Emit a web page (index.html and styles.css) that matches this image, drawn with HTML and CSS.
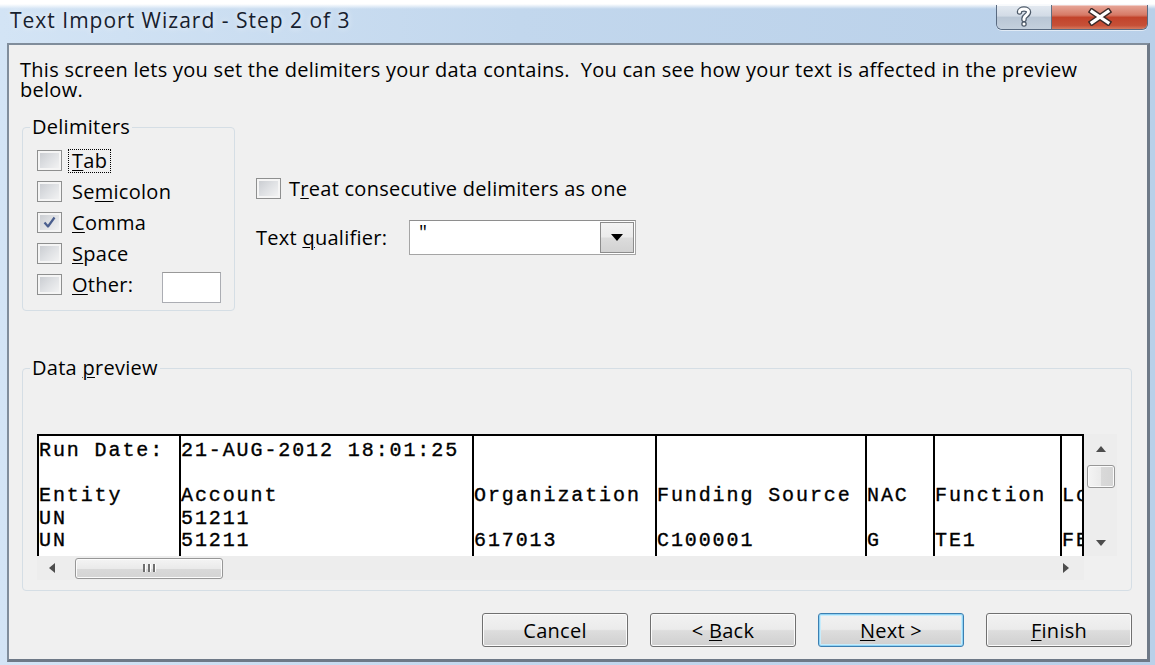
FILE: index.html
```html
<!DOCTYPE html>
<html lang="en">
<head>
<meta charset="utf-8">
<title>Text Import Wizard - Step 2 of 3</title>
<link rel="stylesheet" href="styles.css">
</head>
<body>
<div class="window">
  <header class="titlebar">
    <span class="title">Text Import Wizard - Step 2 of 3</span>
    <div class="caption-buttons">
      <button class="cap cap-help" aria-label="Help">
        <svg width="18" height="22" viewBox="0 0 18 22">
          <g fill="none" stroke-linecap="round" stroke-linejoin="round">
            <path class="ol" d="M4.5 6 C4.5 2 13.5 2 13.5 6 C13.5 9.5 9 9.5 9 12.5 L9 13.5" />
            <path class="ol" d="M9 18 L9 18.1" />
            <path class="fg" d="M4.5 6 C4.5 2 13.5 2 13.5 6 C13.5 9.5 9 9.5 9 12.5 L9 13.5" />
            <path class="fg" d="M9 18 L9 18.1" />
          </g>
        </svg>
      </button>
      <button class="cap cap-close" aria-label="Close">
        <svg width="28" height="18" viewBox="0 0 28 18">
          <g fill="none" stroke-linecap="square">
            <path class="ol" d="M6 3.5 L22 14.5 M22 3.5 L6 14.5" />
            <path class="fg" d="M6 3.5 L22 14.5 M22 3.5 L6 14.5" />
          </g>
        </svg>
      </button>
    </div>
  </header>

  <main class="client">
    <p class="intro">This screen lets you set the delimiters your data contains.&nbsp; You can see how your text is affected in the preview below.</p>

    <div class="options">
      <fieldset class="group delimiters">
        <legend>Delimiters</legend>
        <div class="check-list">
          <label class="check"><span class="cb"></span><span class="lbl focused"><u>T</u>ab</span></label>
          <label class="check"><span class="cb"></span><span class="lbl">Se<u>m</u>icolon</span></label>
          <label class="check"><span class="cb checked"><svg width="17" height="15" viewBox="0 0 17 15"><path d="M3.5 7.5 L7 11.5 L13.5 2.5" fill="none" stroke="#4a5e8e" stroke-width="2.2" stroke-linejoin="round"/></svg></span><span class="lbl"><u>C</u>omma</span></label>
          <label class="check"><span class="cb"></span><span class="lbl"><u>S</u>pace</span></label>
          <label class="check"><span class="cb"></span><span class="lbl"><u>O</u>ther:</span><span class="other-box"></span></label>
        </div>
      </fieldset>

      <div class="side">
        <label class="check treat"><span class="cb"></span><span class="lbl">T<u>r</u>eat consecutive delimiters as one</span></label>
        <div class="qualifier">
          <span class="qualifier-label">Text <u>q</u>ualifier:</span>
          <div class="combo">
            <span class="combo-value">"</span>
            <span class="combo-drop"><svg width="12" height="7" viewBox="0 0 12 7"><path d="M0 0 H12 L6 7 Z" fill="#000"/></svg></span>
          </div>
        </div>
      </div>
    </div>

    <fieldset class="group preview">
      <legend>Data <u>p</u>review</legend>
      <div class="preview-box">
        <div class="preview-top">
          <div class="sheet">
            <div class="col c1"><div>Run Date:</div><div></div><div>Entity</div><div>UN</div><div>UN</div><div></div></div>
            <div class="col c2"><div>21-AUG-2012 18:01:25</div><div></div><div>Account</div><div>51211</div><div>51211</div><div></div></div>
            <div class="col c3"><div></div><div></div><div>Organization</div><div></div><div>617013</div><div></div></div>
            <div class="col c4"><div></div><div></div><div>Funding Source</div><div></div><div>C100001</div><div></div></div>
            <div class="col c5"><div></div><div></div><div>NAC</div><div></div><div>G</div><div></div></div>
            <div class="col c6"><div></div><div></div><div>Function</div><div></div><div>TE1</div><div></div></div>
            <div class="col c7"><div></div><div></div><div>Location</div><div></div><div>FB00</div><div></div></div>
          </div>
          <div class="vscroll">
            <span class="arrow up"><svg width="10" height="6" viewBox="0 0 10 6"><path d="M0 6 L5 0 L10 6 Z" fill="#4d4d4d"/></svg></span>
            <span class="vthumb"></span>
            <span class="vtrack"></span>
            <span class="arrow down"><svg width="10" height="6" viewBox="0 0 10 6"><path d="M0 0 L10 0 L5 6 Z" fill="#4d4d4d"/></svg></span>
          </div>
        </div>
        <div class="preview-bottom">
          <div class="hscroll">
            <span class="arrow left"><svg width="6" height="10" viewBox="0 0 6 10"><path d="M6 0 L6 10 L0 5 Z" fill="#4d4d4d"/></svg></span>
            <span class="hthumb"><span class="grip"><i></i><i></i><i></i></span></span>
            <span class="htrack"></span>
            <span class="arrow right"><svg width="6" height="10" viewBox="0 0 6 10"><path d="M0 0 L6 5 L0 10 Z" fill="#4d4d4d"/></svg></span>
          </div>
          <div class="corner"></div>
        </div>
      </div>
    </fieldset>

    <div class="actions">
      <button class="btn">Cancel</button>
      <button class="btn">&lt; <u>B</u>ack</button>
      <button class="btn default"><u>N</u>ext &gt;</button>
      <button class="btn"><u>F</u>inish</button>
    </div>
  </main>
</div>
</body>
</html>
```

FILE: styles.css
```css
* {
  box-sizing: border-box;
}

html,
body {
  margin: 0;
}

body {
  width: 1155px;
  height: 665px;
  overflow: hidden;
  font-family: "Open Sans", "Noto Sans", sans-serif;
  font-size: 20px;
  letter-spacing: 0.27px;
  color: #000;
}

u {
  text-decoration-thickness: 1px;
  text-underline-offset: 2px;
}

/* ---------- window frame ---------- */

.window {
  height: 665px;
  display: flex;
  flex-direction: column;
  background: linear-gradient(90deg, #d3e4f5 0%, #c2d7ed 45%, #b9d0e9 100%);
}

.titlebar {
  height: 43px;
  flex: none;
  display: flex;
  align-items: flex-start;
  background: linear-gradient(180deg, #ffffff 0, #ffffff 4px, rgba(255, 255, 255, 0) 9px);
}

.title {
  padding: 8px 0 0 10px;
  font-size: 21px;
  letter-spacing: 1px;
  line-height: 24px;
  color: #16202e;
  text-shadow: 0 0 6px rgba(255, 255, 255, 0.8);
}

.caption-buttons {
  display: flex;
  height: 25px;
  margin: 5px 7px 0 auto;
  border: 1px solid #596a80;
  border-top: none;
  border-radius: 0 0 6px 6px;
  overflow: hidden;
  box-shadow: 0 1px 0 rgba(255, 255, 255, 0.55);
}

.cap {
  display: flex;
  align-items: center;
  justify-content: center;
  margin: 0;
  padding: 0;
  border: none;
  height: 100%;
}

.cap .ol {
  stroke: #4d5a69;
  stroke-width: 5.5;
}

.cap .fg {
  stroke: #ffffff;
  stroke-width: 3;
}

.cap-help {
  width: 55px;
  border-right: 1px solid #5f6f82;
  background: linear-gradient(180deg, #e4eaf1 0%, #d2dbe6 45%, #b9c6d5 52%, #c4d0dd 100%);
  box-shadow: inset 0 1px 0 rgba(255, 255, 255, 0.7);
}

.cap-close {
  width: 95px;
  background: linear-gradient(180deg, #e7a79a 0%, #d67a66 42%, #c2432b 52%, #c65037 85%, #d47a5f 100%);
  box-shadow: inset 0 1px 0 rgba(255, 255, 255, 0.45);
}

.cap-close .ol {
  stroke: #3b2a28;
  stroke-width: 6;
}

.cap-close .fg {
  stroke-width: 3.2;
}

/* ---------- client area ---------- */

.client {
  flex: 1;
  display: flex;
  flex-direction: column;
  margin: 0 5px 3px 7px;
  padding: 0 15px 0 13px;
  background: #f0f0f0;
  border-top: 2px solid #808d9b;
  border-left: 2px solid #808d9b;
  border-right: 3px solid #6e7987;
  border-bottom: 3px solid #6e7987;
}

.intro {
  width: 1095px;
  margin: 15px 0 0 -2px;
  line-height: 20px;
}

.options {
  display: flex;
  gap: 21px;
  margin-top: 17px;
}

.group {
  margin: 0;
  min-width: 0;
  border: 1px solid #d5dee5;
  border-radius: 4px;
}

.group legend {
  padding: 0 2px;
  margin-left: -7px;
  line-height: 20px;
}

.delimiters {
  width: 213px;
  height: 194px;
  padding: 13px 0 0 14px;
}

.check-list {
  display: flex;
  flex-direction: column;
  gap: 10px;
}

.check {
  display: flex;
  align-items: center;
  height: 21px;
  gap: 6px;
}

.cb {
  flex: none;
  width: 25px;
  height: 21px;
  display: flex;
  align-items: center;
  justify-content: center;
  border: 1px solid #8e8f8f;
  background: linear-gradient(135deg, #c6c9ce 0%, #dfe1e4 50%, #f6f6f6 100%);
  box-shadow: inset 0 0 0 2px #f5f5f5;
}

.lbl {
  padding: 0 3px;
  line-height: 22px;
  border: 1px dotted transparent;
  white-space: nowrap;
}

.lbl.focused {
  border-color: #000;
}

.other-box {
  width: 59px;
  height: 31px;
  margin: 6px 0 0 19px;
  background: #fff;
  border: 1px solid #abadb3;
  border-top-color: #999;
}

.side {
  padding-top: 61px;
}

.treat {
  gap: 4px;
}

.qualifier {
  display: flex;
  align-items: center;
  margin-top: 21px;
}

.qualifier-label {
  width: 153px;
}

.combo {
  width: 227px;
  height: 35px;
  display: flex;
  justify-content: space-between;
  background: #fff;
  border: 1px solid #a5a5a5;
  border-top-color: #8e8e8e;
  padding: 1px;
}

.combo-value {
  padding: 0 0 0 8px;
  line-height: 20px;
}

.combo-drop {
  width: 34px;
  display: flex;
  align-items: center;
  justify-content: center;
  border: 1px solid #8c8c8c;
  background: linear-gradient(180deg, #f3f3f3 0%, #ebebeb 48%, #dcdcdc 52%, #d2d2d2 100%);
}

/* ---------- data preview ---------- */

.preview {
  width: 1110px;
  margin-top: 47px;
  padding: 56px 14px 10px 14px;
}

.preview-box {
  display: flex;
  flex-direction: column;
}

.preview-top {
  display: flex;
  height: 122px;
}

.sheet {
  width: 1047px;
  height: 122px;
  display: flex;
  overflow: hidden;
  background: #fff;
  border-top: 2px solid #000;
  border-right: 2px solid #000;
  font-family: "Liberation Mono", "Courier New", monospace;
  font-size: 20px;
  letter-spacing: 1.9px;
  -webkit-text-stroke: 0.35px #000;
}

.col {
  flex: none;
  padding-top: 4px;
  border-left: 2px solid #000;
  white-space: pre;
}

.col div {
  height: 22.5px;
  line-height: 22.5px;
}

.c1 { width: 142px; }
.c2 { width: 293px; }
.c3 { width: 183px; }
.c4 { width: 210px; }
.c5 { width: 68px; }
.c6 { width: 127px; }
.c7 { width: 200px; }

.vscroll {
  width: 33px;
  display: flex;
  flex-direction: column;
  align-items: center;
  background: #ededed;
}

.arrow {
  display: flex;
  align-items: center;
  justify-content: center;
  flex: none;
}

.vscroll .arrow {
  width: 100%;
  height: 28px;
}

.vscroll .up {
  padding-top: 2px;
}

.vthumb {
  width: 28px;
  height: 23px;
  flex: none;
  margin-top: 3px;
  border: 1px solid #979797;
  border-radius: 3px;
  background: linear-gradient(90deg, #f4f4f4 0%, #eaeaea 50%, #d9d9d9 51%, #d4d4d4 100%);
  box-shadow: inset 0 0 0 1px #fbfbfb;
}

.vtrack {
  flex: 1;
}

.vscroll .down {
  height: 24px;
  padding-bottom: 2px;
}

.preview-bottom {
  display: flex;
  height: 24px;
}

.hscroll {
  width: 1047px;
  display: flex;
  align-items: center;
  background: #ededed;
}

.hscroll .arrow {
  width: 30px;
  height: 100%;
}

.hthumb {
  width: 148px;
  height: 21px;
  margin-left: 8px;
  display: flex;
  align-items: center;
  justify-content: center;
  border: 1px solid #979797;
  border-radius: 3px;
  background: linear-gradient(180deg, #f4f4f4 0%, #eaeaea 50%, #d9d9d9 51%, #d4d4d4 100%);
  box-shadow: inset 0 0 0 1px #fbfbfb;
}

.grip {
  display: flex;
  gap: 3px;
}

.grip i {
  width: 2px;
  height: 8px;
  background: #6f6f6f;
  box-shadow: 1px 0 0 #fff;
}

.htrack {
  flex: 1;
}

.hscroll .right {
  width: 36px;
}

.corner {
  width: 33px;
  background: #f0f0f0;
}

/* ---------- command buttons ---------- */

.actions {
  display: flex;
  justify-content: flex-end;
  gap: 22px;
  margin-top: 22px;
}

.btn {
  width: 146px;
  height: 34px;
  margin: 0;
  padding: 0;
  font: inherit;
  letter-spacing: inherit;
  color: #000;
  border: 1px solid #707070;
  border-radius: 3px;
  background: linear-gradient(180deg, #f2f2f2 0%, #ebebeb 48%, #dddddd 52%, #cfcfcf 100%);
  box-shadow: inset 0 0 0 1px #fbfbfb;
}

.btn.default {
  border-color: #3c7fb1;
  box-shadow: inset 0 0 0 1px #8fd3f5, inset 0 0 0 2px #c8ecfb;
}
```
